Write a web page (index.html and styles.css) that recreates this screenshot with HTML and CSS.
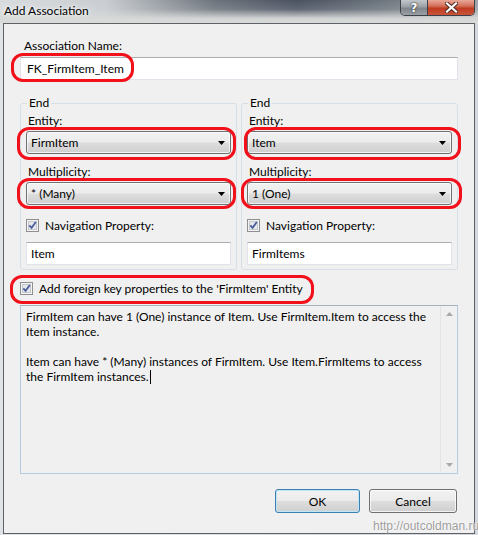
FILE: index.html
```html
<!DOCTYPE html>
<html>
<head>
<meta charset="utf-8">
<link rel="stylesheet" href="styles.css">
</head>
<body>
<div class="window">
  <div class="titlebar">
    <span class="title">Add Association</span>
    <div class="caption-buttons">
      <div class="cbtn help">?</div>
      <div class="cbtn close">
        <svg width="13" height="11" viewBox="0 0 13 11">
          <path d="M2 1.5 L11 9.5 M11 1.5 L2 9.5" stroke="#4a2a22" stroke-width="4" stroke-linecap="square"/>
          <path d="M2 1.5 L11 9.5 M11 1.5 L2 9.5" stroke="#ffffff" stroke-width="2.2" stroke-linecap="square"/>
        </svg>
      </div>
    </div>
  </div>
  <div class="client">
    <div class="lbl">Association Name:</div>
    <div class="textbox name-box">FK_FirmItem_Item</div>

    <div class="ends">
      <fieldset class="group">
        <legend>End</legend>
        <div class="lbl first">Entity:</div>
        <div class="combo"><span>FirmItem</span><svg class="arrow" width="7" height="4" viewBox="0 0 7 4"><path d="M0 0 H7 L3.5 4 Z" fill="#000"/></svg></div>
        <div class="lbl mult">Multiplicity:</div>
        <div class="combo"><span>* (Many)</span><svg class="arrow" width="7" height="4" viewBox="0 0 7 4"><path d="M0 0 H7 L3.5 4 Z" fill="#000"/></svg></div>
        <div class="check-row nav">
          <span class="checkbox"><svg width="13" height="13" viewBox="0 0 13 13"><rect x="0.5" y="0.5" width="12" height="12" fill="#f4f4f4" stroke="#8e8f8f"/><rect x="2.5" y="2.5" width="8" height="8" fill="#e6e8ec" stroke="#c4c7cc"/><path d="M3.3 6.3 L5.6 8.8 L9.8 3" fill="none" stroke="#4a5e9c" stroke-width="1.8"/></svg></span>
          <span>Navigation Property:</span>
        </div>
        <div class="textbox">Item</div>
      </fieldset>
      <fieldset class="group">
        <legend>End</legend>
        <div class="lbl first">Entity:</div>
        <div class="combo"><span>Item</span><svg class="arrow" width="7" height="4" viewBox="0 0 7 4"><path d="M0 0 H7 L3.5 4 Z" fill="#000"/></svg></div>
        <div class="lbl mult">Multiplicity:</div>
        <div class="combo"><span>1 (One)</span><svg class="arrow" width="7" height="4" viewBox="0 0 7 4"><path d="M0 0 H7 L3.5 4 Z" fill="#000"/></svg></div>
        <div class="check-row nav">
          <span class="checkbox"><svg width="13" height="13" viewBox="0 0 13 13"><rect x="0.5" y="0.5" width="12" height="12" fill="#f4f4f4" stroke="#8e8f8f"/><rect x="2.5" y="2.5" width="8" height="8" fill="#e6e8ec" stroke="#c4c7cc"/><path d="M3.3 6.3 L5.6 8.8 L9.8 3" fill="none" stroke="#4a5e9c" stroke-width="1.8"/></svg></span>
          <span>Navigation Property:</span>
        </div>
        <div class="textbox">FirmItems</div>
      </fieldset>
    </div>

    <div class="check-row fk">
      <span class="checkbox"><svg width="13" height="13" viewBox="0 0 13 13"><rect x="0.5" y="0.5" width="12" height="12" fill="#f4f4f4" stroke="#8e8f8f"/><rect x="2.5" y="2.5" width="8" height="8" fill="#e6e8ec" stroke="#c4c7cc"/><path d="M3.3 6.3 L5.6 8.8 L9.8 3" fill="none" stroke="#4a5e9c" stroke-width="1.8"/></svg></span>
      <span>Add foreign key properties to the 'FirmItem' Entity</span>
    </div>

    <div class="desc">
      <div class="desc-text">
        <div class="line">FirmItem can have 1 (One) instance of Item. Use FirmItem.Item to access the</div>
        <div class="line">Item instance.</div>
        <div class="line">&nbsp;</div>
        <div class="line">Item can have * (Many) instances of FirmItem. Use Item.FirmItems to access</div>
        <div class="line">the FirmItem instances.<span class="caret"></span></div>
      </div>
      <div class="scrollbar">
        <svg width="7" height="4" viewBox="0 0 7 4"><path d="M0 4 H7 L3.5 0 Z" fill="#a8a8a8"/></svg>
        <svg width="7" height="4" viewBox="0 0 7 4"><path d="M0 0 H7 L3.5 4 Z" fill="#a8a8a8"/></svg>
      </div>
    </div>

    <div class="buttons">
      <div class="btn ok">OK</div>
      <div class="btn cancel">Cancel</div>
    </div>
  </div>

  <div class="mark m-name"></div>
  <div class="mark m-le"></div>
  <div class="mark m-lm"></div>
  <div class="mark m-re"></div>
  <div class="mark m-rm"></div>
  <div class="mark m-fk"></div>
  <div class="watermark">http://outcoldman.ru</div>
</div>
</body>
</html>
```

FILE: styles.css
```css
* { box-sizing: border-box; }

html, body {
  margin: 0;
  padding: 0;
  background: #dfe3e6;
}

.window {
  position: relative;
  width: 478px;
  height: 535px;
  overflow: hidden;
  font-family: "Lato", "Liberation Sans", sans-serif;
  font-size: 12px;
  color: #000;
  background:
    linear-gradient(to right, #dfe3e6, #d4d8dc);
  display: flex;
  flex-direction: column;
}

.titlebar {
  height: 23px;
  flex: none;
  display: flex;
  align-items: flex-start;
  background:
    linear-gradient(to bottom, rgba(225,228,228,0) 0%, rgba(225,228,228,0.15) 40%, rgba(215,218,216,0.95) 80%, #d8dbda 100%),
    linear-gradient(to right, #d9dcdf 0%, #c9cdd1 22%, #6d737c 45%, #4a5160 62%, #68707a 78%, #9ea3a6 100%);
}

.title {
  padding: 3px 0 0 4px;
  line-height: 15px;
  font-size: 12px;
  color: #000;
  text-shadow: 0 0 6px rgba(255,255,255,0.95), 0 0 3px rgba(255,255,255,0.9);
}

.caption-buttons {
  margin-left: auto;
  margin-right: 3px;
  display: flex;
  height: 16px;
  border: 1px solid #3c4048;
  border-top: none;
  border-radius: 0 0 5px 5px;
  overflow: hidden;
}

.cbtn {
  height: 15px;
  display: flex;
  align-items: center;
  justify-content: center;
}

.help {
  width: 27px;
  border-right: 1px solid #3c4048;
  background: linear-gradient(to bottom, #c3c7cb 0%, #9ba0a6 45%, #7f858c 55%, #9aa0a4 100%);
  color: #fff;
  font-family: "DejaVu Sans", sans-serif;
  font-weight: bold;
  font-size: 12px;
  text-shadow: 0 0 2px #333, 0 0 1px #222;
}

.close {
  width: 46px;
  background: linear-gradient(to bottom, #e8a898 0%, #d4705a 40%, #c03b20 55%, #c8553a 100%);
}

.client {
  flex: 1;
  margin: 0 3px 1px 3px;
  border: 1px solid #5e6266;
  background: #f0f0f0;
  padding: 14px 16px 0 16px;
  display: flex;
  flex-direction: column;
}

.lbl {
  line-height: 15px;
  padding-left: 4px;
}

.textbox {
  height: 23px;
  background: #fff;
  border: 1px solid #e2e3ea;
  border-top-color: #abadb3;
  padding: 0 4px;
  line-height: 21px;
}

.name-box {
  margin-top: 4px;
  padding-left: 6px;
}

.ends {
  margin-top: 15px;
  display: grid;
  grid-template-columns: 217px 217px;
  column-gap: 4px;
}

.group {
  margin: 0;
  border: 1px solid #d5dfe5;
  border-radius: 3px;
  padding: 0 5px 4px 5px;
  min-width: 0;
}

.group legend {
  line-height: 16px;
  padding: 0 2px;
  margin-left: 1px;
}

.group .lbl {
  padding-left: 2px;
}

.group .lbl.first {
  margin-top: 2px;
}

.group .lbl.mult {
  margin-top: 10px;
}

.combo {
  margin-top: 3px;
  height: 23px;
  border: 1px solid #707070;
  border-radius: 3px;
  background: linear-gradient(to bottom, #f2f2f2 0%, #ebebeb 48%, #dddddd 52%, #cfcfcf 100%);
  box-shadow: inset 0 0 0 1px rgba(255,255,255,0.7);
  display: flex;
  align-items: center;
  padding: 0 4px 0 4px;
}

.combo .arrow {
  margin-left: auto;
  margin-right: 1px;
}

.check-row {
  display: flex;
  align-items: center;
  line-height: 15px;
}

.checkbox {
  width: 13px;
  height: 13px;
  display: flex;
}

.nav {
  margin-top: 13px;
  gap: 6px;
}

.group .textbox {
  margin-top: 9px;
}

.fk {
  margin-top: 11px;
  gap: 6px;
}

.desc {
  margin-top: 9px;
  height: 169px;
  border: 1px solid #b4cbe0;
  border-top-color: #a7b0ba;
  display: flex;
}

.desc-text {
  flex: 1;
  padding: 3px 0 0 5px;
  line-height: 15px;
  white-space: nowrap;
}

.caret {
  display: inline-block;
  width: 1px;
  height: 14px;
  background: #000;
  vertical-align: -3px;
  margin-left: 1px;
}

.scrollbar {
  width: 17px;
  border-left: 1px solid #e4e4e4;
  background: #f0f0f0;
  display: flex;
  flex-direction: column;
  align-items: center;
  justify-content: space-between;
  padding: 6px 0 6px 0;
}

.buttons {
  margin-top: 15px;
  display: flex;
  justify-content: flex-end;
  gap: 9px;
  padding-right: 1px;
}

.btn {
  height: 24px;
  border: 1px solid #707070;
  border-radius: 3px;
  background: linear-gradient(to bottom, #f2f2f2 0%, #ebebeb 48%, #dddddd 52%, #cfcfcf 100%);
  box-shadow: inset 0 0 0 1px rgba(255,255,255,0.75);
  display: flex;
  align-items: center;
  justify-content: center;
}

.ok {
  width: 85px;
  border-color: #3c7fb1;
  box-shadow: inset 0 0 0 1px #bfe6f6;
}

.cancel {
  width: 88px;
}

.mark {
  position: absolute;
  border: 3px solid #f2101a;
  border-radius: 12px;
}

.m-name { left: 11px; top: 53px; width: 123px; height: 29px; }
.m-le { left: 17px; top: 127px; width: 219px; height: 33px; }
.m-lm { left: 17px; top: 178px; width: 219px; height: 31px; }
.m-re { left: 244px; top: 127px; width: 217px; height: 33px; }
.m-rm { left: 241px; top: 178px; width: 221px; height: 31px; }
.m-fk { left: 10px; top: 275px; width: 304px; height: 29px; }

.watermark {
  position: absolute;
  left: 373px;
  top: 519px;
  font-family: "Liberation Sans", sans-serif;
  font-size: 12px;
  line-height: 15px;
  color: #9c9c9c;
  white-space: nowrap;
  text-shadow: 0 0 2px #fff, 0 0 1px #fff;
}
```
